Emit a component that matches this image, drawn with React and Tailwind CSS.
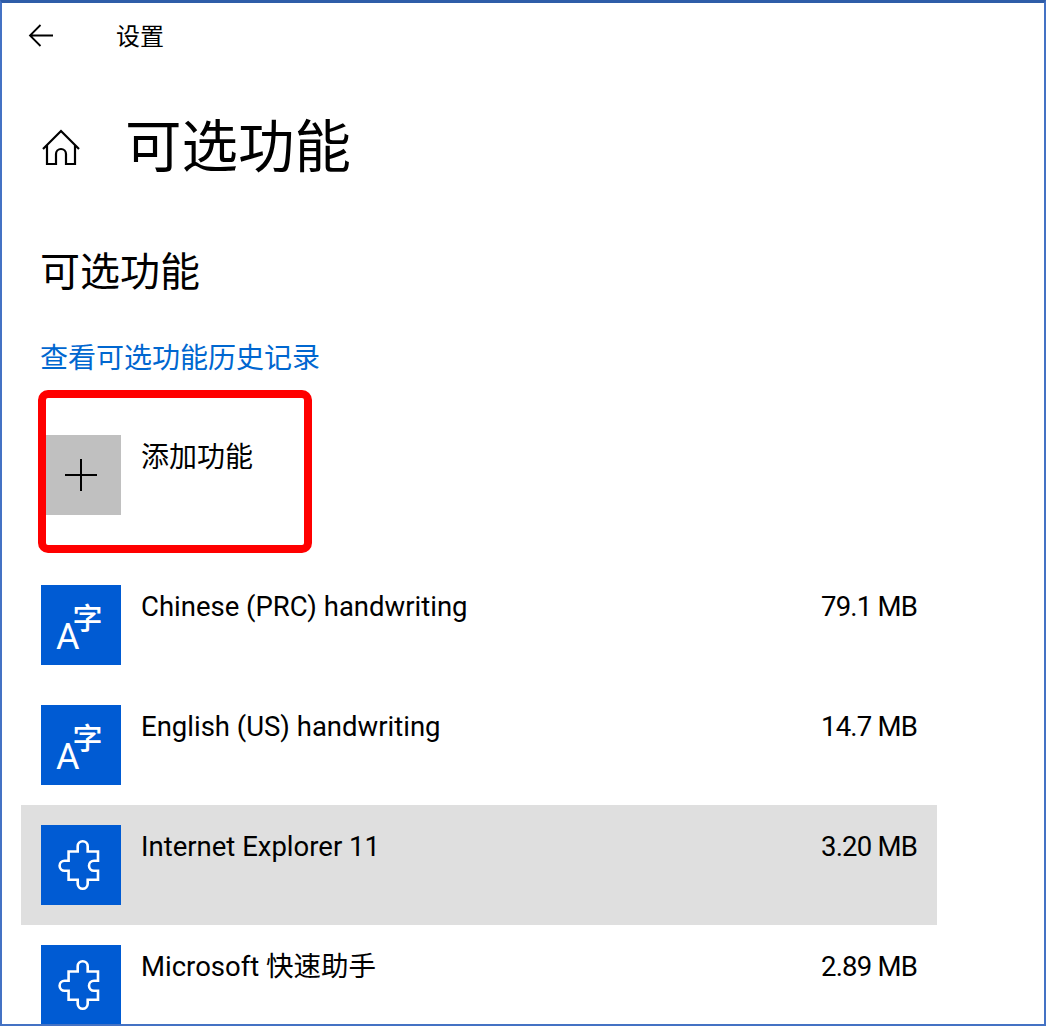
import React from 'react';

const FONT = "font-['Roboto','Noto_Sans_CJK_SC',sans-serif]";

// Language pack tile: "A" with the 字 glyph above it
const LanguageIcon = () => (
  <svg viewBox="0 0 80 80" className="w-full h-full" fill="#fff">
    <text x="15" y="64" fontSize="36" fontFamily="'Roboto', sans-serif">A</text>
    <text x="31.5" y="44" fontSize="30" fontWeight="500" fontFamily="'Noto Sans CJK SC', sans-serif">字</text>
  </svg>
);

// Puzzle piece tile
const PuzzleIcon = () => (
  <svg viewBox="0 0 80 80" className="w-full h-full" fill="none" stroke="#fff" strokeWidth="2.6">
    <path d="M27.6 26.5H36.7V21.3A5 5 0 0 1 46.7 21.3V26.5H57V35.7H53A5 5 0 0 0 53 45.7H57V54.7H46.7V58.7A5 5 0 0 1 36.7 58.7V54.7H27.6V45.7H23.6A5 5 0 0 1 23.6 35.7H27.6Z" />
  </svg>
);

const FeatureRow = ({ icon, name, size, selected }) => (
  <div className={`flex shrink-0 w-[916px] h-[120px] p-5 ${selected ? 'bg-[#dfdfdf]' : ''}`}>
    <div className="w-20 h-20 shrink-0 bg-[#005bd3]">{icon}</div>
    <div className="flex-1 flex justify-between pl-5 text-[27.5px] leading-[42px] mt-[1px]">
      <span>{name}</span>
      <span className="tracking-[-0.8px]">{size}</span>
    </div>
  </div>
);

const App = () => {
  return (
    <div className={`relative w-[1046px] h-[1026px] overflow-hidden bg-white text-black border-2 border-t-[3px] border-[#4472c4] border-t-[#2f5da8] ${FONT}`}>
      {/* Title bar */}
      <div className="flex items-center h-[66px] pl-[26px]">
        <svg width="26" height="24" viewBox="0 0 26 24" fill="none" stroke="#000" strokeWidth="1.8">
          <path d="M25 11.5H2M12.5 1L2 11.5L12.5 22" />
        </svg>
        <span className="ml-[62px] pt-[2px] text-2xl leading-8">设置</span>
      </div>

      {/* Page heading */}
      <div className="flex items-center h-[92px] pl-[40px] mt-[32px]">
        <svg width="38" height="37" viewBox="0 0 38 37" fill="none" stroke="#000" strokeWidth="2.2">
          <path d="M1 20L19 2L37 20M5 16.5V35H14V25A5 5 0 0 1 24 25V35H33V16.5" />
        </svg>
        <h1 className="ml-[45px] pt-[2px] text-[56.5px] leading-[72px]">可选功能</h1>
      </div>

      {/* Section */}
      <div className="pl-[38px] mt-[54px]">
        <h2 className="text-[40px] leading-[52px]">可选功能</h2>
        <a className="block mt-[40px] text-[28px] leading-[40px] text-[#0067d0]">查看可选功能历史记录</a>
      </div>

      {/* Add feature */}
      <div className="flex mt-[56px] pl-[39px] h-[130px]">
        <div className="flex items-center justify-center w-20 h-20 bg-[#c0c0c0]">
          <svg width="34" height="34" viewBox="0 0 34 34" stroke="#000" strokeWidth="2">
            <path d="M1 17H33M17 1V33" />
          </svg>
        </div>
        <span className="ml-5 pt-[2px] text-[28px] leading-[42px]">添加功能</span>
      </div>

      {/* Installed features */}
      <div className="flex flex-col pl-[19px]">
        <FeatureRow icon={<LanguageIcon />} name="Chinese (PRC) handwriting" size="79.1 MB" />
        <FeatureRow icon={<LanguageIcon />} name="English (US) handwriting" size="14.7 MB" />
        <FeatureRow icon={<PuzzleIcon />} name="Internet Explorer 11" size="3.20 MB" selected />
        <FeatureRow icon={<PuzzleIcon />} name="Microsoft 快速助手" size="2.89 MB" />
      </div>

      {/* Red annotation box */}
      <div className="absolute left-[36px] top-[387px] w-[274px] h-[163px] border-8 border-[#ff0000] rounded-[10px]" />
    </div>
  );
};

export default App;
